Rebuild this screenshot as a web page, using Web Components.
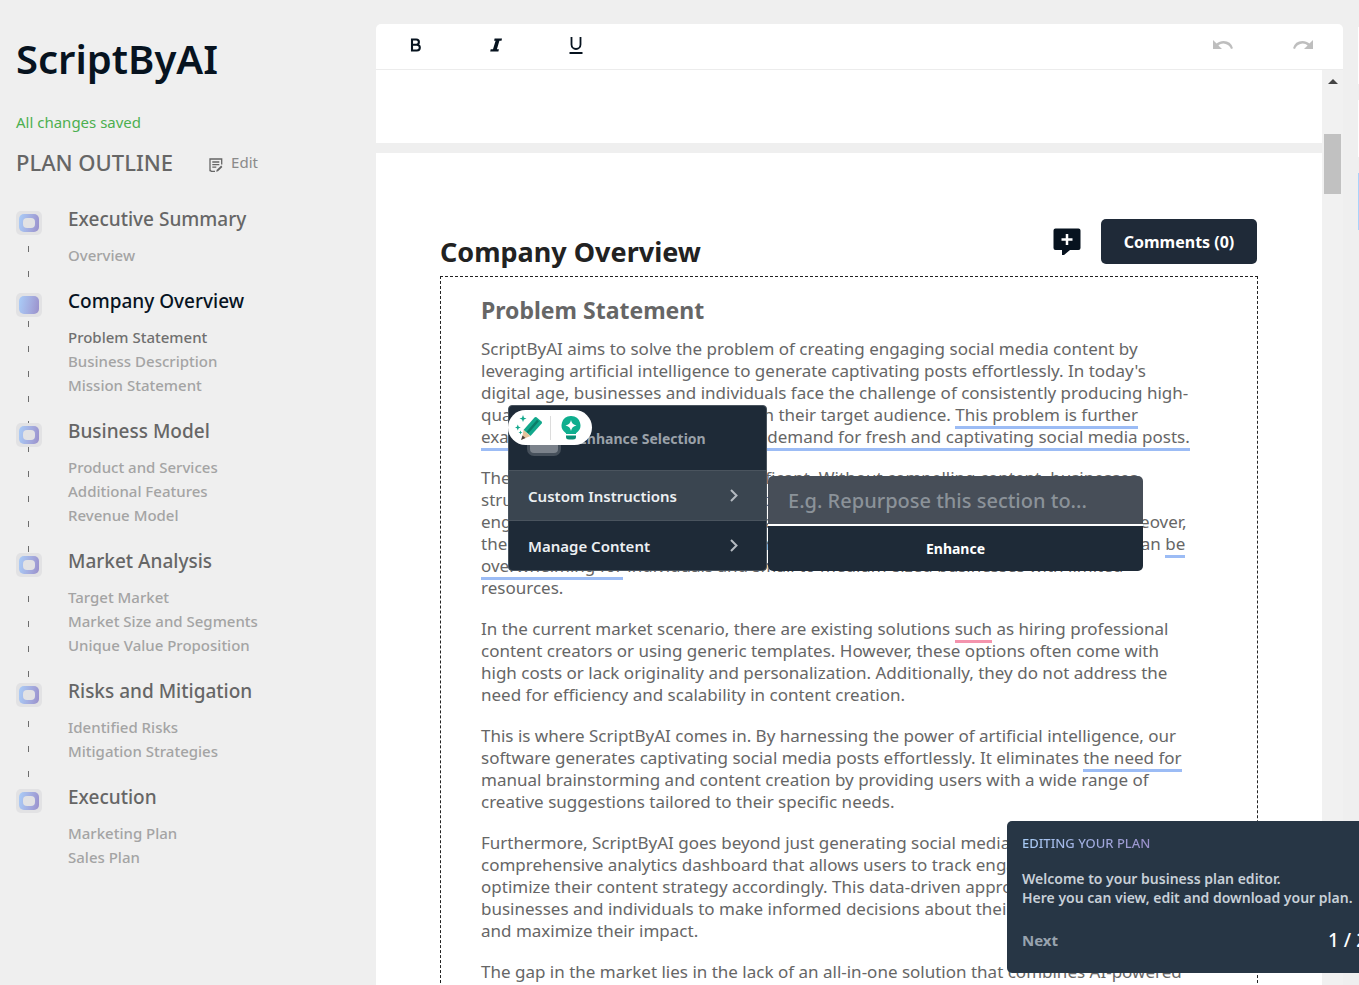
<!DOCTYPE html>
<html lang="en">
<head>
<meta charset="utf-8">
<title>ScriptByAI</title>
<style>
  body {
    margin: 0;
    background: #efefef;
    font-family: "Noto Sans", "Open Sans", sans-serif;
    color: #666;
  }
</style>
</head>
<body>
<plan-app>
  <plan-outline slot="outline" name="ScriptByAI">
    <outline-section heading="Executive Summary" items="Overview"></outline-section>
    <outline-section heading="Company Overview" items="Problem Statement|Business Description|Mission Statement" current></outline-section>
    <outline-section heading="Business Model" items="Product and Services|Additional Features|Revenue Model"></outline-section>
    <outline-section heading="Market Analysis" items="Target Market|Market Size and Segments|Unique Value Proposition"></outline-section>
    <outline-section heading="Risks and Mitigation" items="Identified Risks|Mitigation Strategies"></outline-section>
    <outline-section heading="Execution" items="Marketing Plan|Sales Plan"></outline-section>
  </plan-outline>

  <plan-editor slot="editor" heading="Company Overview">
    <plan-statement heading="Problem Statement"></plan-statement>
  </plan-editor>

  <tour-card slot="tour" heading="Editing your plan" step="1 / 2">
    Welcome to your business plan editor.<br>Here you can view, edit and download your plan.
  </tour-card>
</plan-app>

<script>
// Base class: clones the html of the subclass into an open shadow root
class BaseElement extends HTMLElement {
  constructor() {
    super();
    this.attachShadow({ mode: 'open' });
  }

  connectedCallback() {
    const template = document.createElement('template');
    template.innerHTML = this.render();
    this.shadowRoot.replaceChildren(template.content.cloneNode(true));
  }
}

// Page layout
class PlanApp extends BaseElement {
  render() {
    return `
      <style>
        :host {
          display: grid;
          grid-template-columns: 376px minmax(0, 1fr) 1px;
          height: 100vh;
          overflow: hidden;
        }
        main {
          display: flex;
          min-height: 0;
          padding: 24px 15px 0 0;
        }
        aside {
          display: flex;
          flex-direction: column;
          gap: 16px;
          padding-top: 27px;
        }
        aside div { height: 57px; background: #fff; }
        aside div.active { background: #a9d2fb; }
      </style>
      <slot name="outline"></slot>
      <main><slot name="editor"></slot></main>
      <aside><div></div><div></div><div class="active"></div></aside>
      <slot name="tour"></slot>
    `;
  }
}

// Left column
class PlanOutline extends BaseElement {
  render() {
    return `
      <style>
        :host { display: block; padding: 31px 16px 0; }
        h1 {
          margin: 0;
          font-size: 40px;
          line-height: 56px;
          font-weight: 600;
          color: #07131f;
        }
        .saved {
          margin: 24px 0 0;
          font-size: 15px;
          line-height: 22px;
          color: #4caf50;
        }
        .bar {
          display: flex;
          align-items: center;
          gap: 36px;
          margin: 14px 0 31px;
        }
        h2 {
          margin: 0;
          font-size: 22px;
          line-height: 30px;
          font-weight: 500;
          text-transform: uppercase;
        }
        button {
          display: flex;
          align-items: center;
          gap: 8px;
          padding: 0;
          border: 0;
          background: none;
          font: 15px/20px "Noto Sans", sans-serif;
          color: #8a8a8a;
        }
        button svg { margin-top: 6px; }
        nav {
          background: linear-gradient(#6e6e6e 6px, transparent 6px) 12px 13px / 1px 25px repeat-y;
        }
      </style>
      <h1>${this.getAttribute('name')}</h1>
      <p class="saved">All changes saved</p>
      <div class="bar">
        <h2>Plan outline</h2>
        <button type="button">
          <svg width="14" height="15" viewBox="0 0 14 15" fill="none" stroke="#666" stroke-width="1.3">
            <path d="M6 13.3H2.2L1 12V1h11.7v5.5M1 13.3V1M3.3 4h7M3.3 6.6h7M3.3 9.2h4"/>
            <path d="M7.2 13.8l.4-1.9 4.6-4.3 1.2 1.3-4.4 4.3z" fill="#666" stroke="none"/>
          </svg>
          Edit
        </button>
      </div>
      <nav><slot></slot></nav>
    `;
  }
}

// One chapter of the outline: heading="..." items="a|b|c", "current" for the open one
class OutlineSection extends BaseElement {
  render() {
    const current = this.hasAttribute('current');
    const items = this.getAttribute('items').split('|')
      .map((item, i) => `<li><a href="#"${current && i === 0 ? ' class="active"' : ''}>${item}</a></li>`)
      .join('');
    return `
      <style>
        :host {
          display: grid;
          grid-template-columns: 26px 1fr;
          column-gap: 26px;
          align-items: start;
          padding-bottom: 23px;
        }
        :host(:last-of-type) { background: #efefef; }
        .mark {
          display: grid;
          place-items: center;
          height: 24px;
          margin-top: 3px;
          border-radius: 5px;
          background: #e2e2e4;
        }
        .mark i {
          display: grid;
          place-items: center;
          width: 20px;
          height: 18px;
          border-radius: 5px;
          background: linear-gradient(100deg, #aacdf8, #a3aade 60%, #9a90cb);
        }
        .mark i::after {
          content: "";
          width: 12px;
          height: 10px;
          border-radius: 4px;
          background: #e2e2e4;
        }
        :host([current]) .mark i::after { display: none; }
        h3 {
          margin: 0 0 12px;
          font-size: 19px;
          line-height: 23px;
          font-weight: 500;
          color: #666;
        }
        :host([current]) h3 { color: #07131f; }
        ul { margin: 0; padding: 0; list-style: none; }
        li { font-size: 15px; line-height: 24px; }
        a { color: #a4a4a4; font-weight: 500; text-decoration: none; }
        a.active { color: #707070; }
      </style>
      <span class="mark"><i></i></span>
      <div>
        <h3>${this.getAttribute('heading')}</h3>
        <ul>${items}</ul>
      </div>
    `;
  }
}

// Formatting buttons on top of the document
class EditorToolbar extends BaseElement {
  render() {
    return `
      <style>
        :host {
          display: flex;
          height: 45px;
          border-bottom: 1px solid #ececec;
          border-radius: 5px 5px 0 0;
          background: #fff;
        }
        button {
          display: grid;
          place-items: center;
          width: 80px;
          height: 42px;
          padding: 0;
          border: 0;
          background: none;
        }
        button:disabled { opacity: .25; }
        .space { flex: 1; }
      </style>
      <button type="button" aria-label="Bold">
        <svg width="12" height="14" viewBox="0 0 12 14" fill="none" stroke="#07131f" stroke-width="2.1">
          <path d="M2 1.500h4.300a2.500 2.500 0 0 1 0 5.200H2zM2 6.700h4.900a2.900 2.900 0 0 1 0 5.800H2z"/>
        </svg>
      </button>
      <button type="button" aria-label="Italic">
        <svg width="12" height="14" viewBox="0 0 12 14" fill="#07131f">
          <path d="M4.600.5H12l-.5 2.200H9.400L6.900 11.300h2L8.400 13.500H.2l.5-2.200h2.300L5.600 2.700H4.100z"/>
        </svg>
      </button>
      <button type="button" aria-label="Underline">
        <svg width="14" height="18" viewBox="0 0 14 18" fill="none" stroke="#07131f">
          <path d="M2.500 1v7.500a4.500 4.500 0 0 0 9 0V1" stroke-width="1.800"/>
          <path d="M.5 17h13" stroke-width="2"/>
        </svg>
      </button>
      <span class="space"></span>
      <button type="button" aria-label="Undo" disabled>
        <svg width="20" height="10" viewBox="0 0 20 10">
          <path d="M10.500 1C7.900 1 5.500 2 3.600 3.600L0 0v9h9L5.400 5.400A8 8 0 0 1 18 9l2-.8A10 10 0 0 0 10.500 1z"/>
        </svg>
      </button>
      <button type="button" aria-label="Redo" disabled>
        <svg width="20" height="10" viewBox="0 0 20 10">
          <path d="M9.500 1c2.600 0 5 1 6.900 2.600L20 0v9h-9l3.600-3.600A8 8 0 0 0 2 9L0 8.200A10 10 0 0 1 9.500 1z"/>
        </svg>
      </button>
    `;
  }
}

// Document area with its scroll track
class PlanEditor extends BaseElement {
  render() {
    return `
      <style>
        :host {
          flex: 1;
          display: flex;
          flex-direction: column;
          min-width: 0;
        }
        .scroller {
          flex: 1;
          display: flex;
          min-height: 0;
        }
        .pages {
          flex: 1;
          display: flex;
          flex-direction: column;
          gap: 10px;
          min-width: 0;
          overflow: hidden;
        }
        .previous { flex: none; height: 73px; background: #fff; }
        .page { flex: none; padding: 66px 64px 0; background: #fff; }
        .track {
          width: 17px;
          padding: 0 2px;
          background: #f1f1f1;
        }
        .track svg { display: block; margin: 9px auto 50px; }
        .thumb { height: 60px; background: #c1c1c1; }
        header {
          display: flex;
          align-items: center;
          gap: 20px;
          margin-bottom: 12px;
          padding-right: 1px;
        }
        h2 {
          flex: 1;
          margin: 20px 0 0;
          font-size: 27px;
          line-height: 25px;
          font-weight: 700;
          color: #222;
        }
        button {
          padding: 0;
          border: 0;
          background: none;
        }
        .add svg { display: block; }
        .comments {
          width: 156px;
          height: 45px;
          border-radius: 5px;
          background: #1f2a38;
          font: 700 16px "Noto Sans", sans-serif;
          color: #fff;
        }
      </style>
      <editor-toolbar></editor-toolbar>
      <div class="scroller">
        <div class="pages">
          <div class="previous"></div>
          <section class="page">
            <header>
              <h2>${this.getAttribute('heading')}</h2>
              <button type="button" class="add" aria-label="Add comment">
                <svg width="28" height="28" viewBox="0 0 28 28">
                  <path d="M2.500.5h23q2 0 2 2v17.500q0 2-2 2H17L11 27H9v-5H2.500q-2 0-2-2V2.500q0-2 2-2z" fill="#07131f"/>
                  <path d="M14 6v11M8.500 11.500h11" stroke="#fff" stroke-width="2.500"/>
                </svg>
              </button>
              <button type="button" class="comments">Comments (0)</button>
            </header>
            <slot></slot>
          </section>
        </div>
        <div class="track">
          <svg width="10" height="5"><path d="M0 5l5-5 5 5z" fill="#444"/></svg>
          <div class="thumb"></div>
        </div>
      </div>
    `;
  }
}

// Text block being edited, with the enhance menu opened over it
class PlanStatement extends BaseElement {
  render() {
    return `
      <style>
        :host {
          display: block;
          position: relative;
          padding: 18px 40px 0;
          border: 1px dashed #222;
        }
        h3 {
          margin: 0 0 12px;
          font-size: 23px;
          line-height: 31px;
          font-weight: 700;
        }
        p {
          margin: 0 0 19px;
          font-size: 17px;
          line-height: 22px;
          white-space: nowrap;
        }
        mark {
          background: none;
          color: inherit;
          border-bottom: 3px solid #9cbcf5;
        }
        mark.red { border-color: #f494ad; }
        enhance-menu { position: absolute; left: 67px; top: 128px; }
        writing-pill { position: absolute; left: 67px; top: 133px; }
      </style>
      <h3>${this.getAttribute('heading')}</h3>
      <p>ScriptByAI aims to solve the problem of creating engaging social media content by<br>
        leveraging artificial intelligence to generate captivating posts effortlessly. In today's<br>
        digital age, businesses and individuals face the challenge of consistently producing high-<br>
        quality content which resonates with their target audience. <mark>This problem is further<br>
        exacerbated by the rapidly growing demand for fresh and captivating social media posts.</mark></p>
      <p>The urgency of this problem is significant. Without compelling content, businesses<br>
        struggle to attract and retain the attention of their customers, and lose<br>
        engagement, lower brand awareness and the loss of potential revenue online. Moreover,<br>
        the time, effort and resources required to produce engaging content consistently can <mark>be<br>
        overwhelming for</mark> individuals and small to medium-sized businesses with limited<br>
        resources.</p>
      <p>In the current market scenario, there are existing solutions <mark class="red">such</mark> as hiring professional<br>
        content creators or using generic templates. However, these options often come with<br>
        high costs or lack originality and personalization. Additionally, they do not address the<br>
        need for efficiency and scalability in content creation.</p>
      <p>This is where ScriptByAI comes in. By harnessing the power of artificial intelligence, our<br>
        software generates captivating social media posts effortlessly. It eliminates <mark>the need for</mark><br>
        manual brainstorming and content creation by providing users with a wide range of<br>
        creative suggestions tailored to their specific needs.</p>
      <p>Furthermore, ScriptByAI goes beyond just generating social media posts. It offers a<br>
        comprehensive analytics dashboard that allows users to track engagement and<br>
        optimize their content strategy accordingly. This data-driven approach enables<br>
        businesses and individuals to make informed decisions about their content<br>
        and maximize their impact.</p>
      <p>The gap in the market lies in the lack of an all-in-one solution that combines AI-powered</p>
      <enhance-menu></enhance-menu>
      <writing-pill></writing-pill>
    `;
  }
}

// Context menu with the custom instructions flyout
class EnhanceMenu extends BaseElement {
  render() {
    const chevron = `
      <svg width="8" height="13" viewBox="0 0 8 13" fill="none" stroke="#b4bac1" stroke-width="2">
        <path d="M1 1l5.500 5.500L1 12"/>
      </svg>`;
    return `
      <style>
        :host { display: flex; align-items: flex-end; gap: 1px; }
        .menu {
          width: 257px;
          border: 1px solid #4a545e;
          border-radius: 4px;
          overflow: hidden;
          background: #1e2a37;
        }
        .title {
          display: flex;
          align-items: center;
          gap: 18px;
          height: 64px;
          padding: 0 18px;
          font-size: 14px;
          font-weight: 700;
          color: #9aa1a9;
        }
        .title i {
          width: 34px;
          height: 32px;
          border-radius: 7px;
          margin-top: 4px;
          background: #7b828b;
          border: 3px solid #46505b;
          box-sizing: border-box;
        }
        .item {
          display: flex;
          align-items: center;
          justify-content: space-between;
          width: 100%;
          height: 50px;
          padding: 0 28px 0 19px;
          border: 0;
          border-top: 1px solid #4a545e;
          background: none;
          font: 600 15px "Noto Sans", sans-serif;
          color: #eceff2;
        }
        .item.open { background: #3a4550; }
        form {
          display: flex;
          flex-direction: column;
          gap: 2px;
          width: 375px;
          border-radius: 5px;
          overflow: hidden;
          background: #fff;
        }
        input {
          height: 48px;
          box-sizing: border-box;
          padding: 0 20px;
          border: 0;
          border-radius: 0;
          background: #474e58;
          font: 500 20px "Noto Sans", sans-serif;
          color: #fff;
        }
        input::placeholder { color: #8b9299; opacity: 1; }
        form button {
          height: 45px;
          border: 0;
          background: #1e2a37;
          font: 700 14px "Noto Sans", sans-serif;
          color: #fff;
        }
      </style>
      <div class="menu">
        <div class="title"><i></i>Enhance Selection</div>
        <button type="button" class="item open">Custom Instructions ${chevron}</button>
        <button type="button" class="item">Manage Content ${chevron}</button>
      </div>
      <form>
        <input type="text" aria-label="Custom instructions" placeholder="E.g. Repurpose this section to...">
        <button type="button">Enhance</button>
      </form>
    `;
  }
}

// Floating pill of the writing assistant
class WritingPill extends BaseElement {
  render() {
    return `
      <style>
        :host {
          display: flex;
          align-items: center;
          width: 84px;
          height: 35px;
          border-radius: 18px;
          background: #fff;
        }
        button {
          flex: 1;
          display: grid;
          place-items: center;
          padding: 0;
          border: 0;
          background: none;
        }
        button + button { border-left: 1px solid #dcdcdc; }
      </style>
      <button type="button" aria-label="Improve writing">
        <svg width="28" height="26" viewBox="0 0 28 26">
          <path d="M8.500 15L19.500 2.500q1-1 2-.2l5 4.200q1 1 .2 2L15.500 21z" fill="#12a88c"/>
          <path d="M12.500 17.500L23 5.500" stroke="#0a7d69" stroke-width="2.500"/>
          <path d="M8.500 15l7 6-8.500 3.500z" fill="#e3c39b"/>
          <path d="M7.500 20.500l3 2.500L6 25z" fill="#4a4038"/>
          <path d="M8 0l1 2.700L11.500 3.600 9 4.500 8 7 7 4.500 4.500 3.600 7 2.700zM2.800 9.500l.9 2.200 2.100.8-2.100.8-.9 2.200-.9-2.200-2.100-.8 2.100-.8z" fill="#12a88c"/>
          <path d="M5.500 15.500l.6 1.400 1.400.6-1.400.6-.6 1.400-.6-1.400-1.400-.6 1.400-.6z" fill="#12a88c"/>
        </svg>
      </button>
      <button type="button" aria-label="Ideas">
        <svg width="20" height="24" viewBox="0 0 20 24" fill="#0fae8e">
          <path d="M10 0a9.300 9.300 0 0 0-5 17.200V18h10v-.8A9.300 9.300 0 0 0 10 0z"/>
          <path d="M5 19.500h10V21q0 2.500-3 2.500H8Q5 23.500 5 21z" fill="#0a8f76"/>
          <path d="M10 4q.8 4.700 5.500 5.500Q10.800 10.300 10 15q-.8-4.700-5.500-5.500Q9.200 8.700 10 4z" fill="#fff"/>
        </svg>
      </button>
    `;
  }
}

// Onboarding card, sticks out of the right edge of the window
class TourCard extends BaseElement {
  render() {
    return `
      <style>
        :host {
          position: fixed;
          right: -20px;
          bottom: 12px;
          width: 372px;
          box-sizing: border-box;
          padding: 12px 12px 16px 15px;
          border-radius: 5px;
          background: #273645;
          white-space: nowrap;
        }
        h4 {
          margin: 0 0 16px;
          width: max-content;
          font-size: 13px;
          line-height: 20px;
          font-weight: 500;
          text-transform: uppercase;
          color: transparent;
          background: linear-gradient(90deg, #a9cdf7, #9a90cb);
          background-clip: text;
        }
        p {
          margin: 0 0 16px;
          font-size: 14px;
          line-height: 19px;
          font-weight: 600;
          color: #c8d0d8;
        }
        footer {
          display: flex;
          align-items: center;
          justify-content: space-between;
        }
        button {
          padding: 0;
          border: 0;
          background: none;
          font: 700 15px "Noto Sans", sans-serif;
          color: #98a3ae;
        }
        span { font-size: 19px; line-height: 34px; font-weight: 500; color: #fff; }
      </style>
      <h4>${this.getAttribute('heading')}</h4>
      <p><slot></slot></p>
      <footer>
        <button type="button">Next</button>
        <span>${this.getAttribute('step')}</span>
      </footer>
    `;
  }
}

customElements.define('plan-app', PlanApp);
customElements.define('plan-outline', PlanOutline);
customElements.define('outline-section', OutlineSection);
customElements.define('editor-toolbar', EditorToolbar);
customElements.define('plan-editor', PlanEditor);
customElements.define('plan-statement', PlanStatement);
customElements.define('enhance-menu', EnhanceMenu);
customElements.define('writing-pill', WritingPill);
customElements.define('tour-card', TourCard);
</script>
</body>
</html>
